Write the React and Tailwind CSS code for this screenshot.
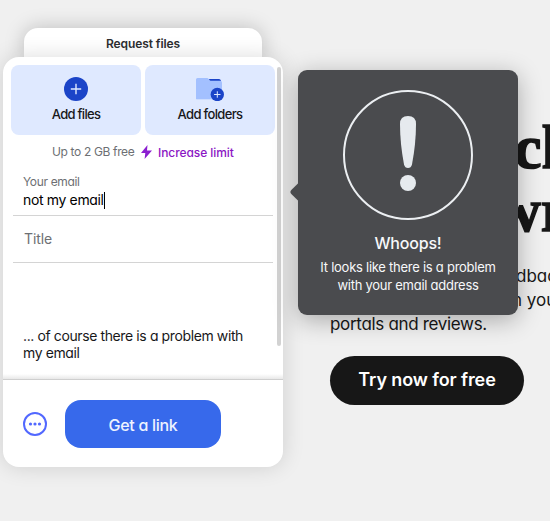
import React from "react";

const sans = "font-['Inter','Liberation_Sans',sans-serif] [font-feature-settings:'cv11','ss03']";

function AddFilesIcon() {
  return (
    <svg width="24" height="24" viewBox="0 0 24 24" className="block">
      <circle cx="12" cy="12" r="12" fill="#1b44c8" />
      <path d="M12 6.800v10.400M6.800 12h10.400" stroke="#e0eaff" strokeWidth="1.400" />
    </svg>
  );
}

function AddFolderIcon() {
  return (
    <svg width="28" height="24" viewBox="0 0 28 24" className="block">
      <path d="M13 2h10q1.500 0 2 2v2H14z" fill="#1b44c8" />
      <path d="M0 22V2.500Q0 1 1.500 1H11q1.200 0 1.700.9l.5.9q.4.900 1.500.900H24q2 0 2 2V22z" fill="#a3c0ff" />
      <path d="M0 22h26v.8H1q-1 0-1-.8z" fill="#c7d9ff" />
      <circle cx="21.300" cy="17.500" r="6.700" fill="#1b44c8" />
      <path d="M21.300 14.300v6.400M18.100 17.500h6.400" stroke="#e0eaff" strokeWidth="1" />
    </svg>
  );
}

function UploadTile({ icon, children }) {
  return (
    <div className="flex h-[70px] w-[130px] flex-col items-center rounded-lg bg-[#dfe9ff] pt-3 text-[13px] font-medium text-[#17181a]">
      {icon}
      {children}
    </div>
  );
}

function TransferPanel() {
  return (
    <div className="w-[286px] shrink-0 pl-[3px] pt-7">
      <div className="ml-[21px] h-[29px] w-[238px] rounded-t-[14px] bg-white text-center text-[12px] font-semibold leading-[32px] text-[#2d2e30] shadow-[0_0_20px_rgba(0,0,0,0.22)]">
        <span className="tracking-[-0.1px]">Request files</span>
      </div>
      <div className="relative flex h-[410px] w-[280px] flex-col overflow-hidden rounded-2xl bg-white shadow-[0_0_22px_rgba(0,0,0,0.14)]">
        <div className="flex h-[322px]">
          <div className="w-[272px] shrink-0 pl-2 pt-2">
            <div className="flex gap-1">
              <UploadTile icon={<AddFilesIcon />}>
                <span className="mt-[3px] leading-[20px] tracking-[-0.7px]">Add files</span>
              </UploadTile>
              <UploadTile icon={<AddFolderIcon />}>
                <span className="mt-[3px] leading-[20px] tracking-[-0.65px]">Add folders</span>
              </UploadTile>
            </div>
            <div className="flex h-[34px] items-center pl-[41px] text-[12px]">
              <span className="w-[89px] whitespace-nowrap tracking-[-0.35px] text-[#6d6f73]">Up to 2 GB free</span>
              <svg width="11" height="14" viewBox="0 0 11 14" className="block">
                <path d="M6.500 0L0 8h4.300L3.600 14 11 5.600H6z" fill="#8b1fd0" />
              </svg>
              <span className="ml-[6px] mt-[2px] whitespace-nowrap font-medium tracking-[-0.07px] text-[#8b16c4]">Increase limit</span>
            </div>
            <div className="ml-[2px] h-[47px] w-[260px] border-b border-[#d4d4d4] pl-[10px] pt-[5px]">
              <div className="text-[12px] leading-[16px] tracking-[-0.35px] text-[#6d6f73]">Your email</div>
              <div className="flex items-center text-[14px] leading-[20px] text-black">
                <span className="tracking-[-0.35px]">not my email</span>
                <span className="h-[17px] w-px bg-black" />
              </div>
            </div>
            <div className="ml-[2px] h-[47px] w-[260px] border-b border-[#d4d4d4] pl-[11px] text-[14px] leading-[45px] tracking-[-0.1px] text-[#6d6f73]">Title</div>
            <div className="whitespace-nowrap pl-3 pt-[64px] text-[14px] leading-[17px] tracking-[-0.39px] text-[#17181a]">
              <div>... of course there is a problem with</div>
              <div>my email</div>
            </div>
          </div>
          <div className="ml-[2px] mt-[10px] h-[279px] w-1 rounded-full bg-[#d2d2d2]" />
        </div>
        <div className="-mt-[5px] h-[5px] bg-gradient-to-b from-white to-[#e8e8e8]" />
        <div className="flex h-[88px] items-center border-t border-[#cfcfcf] pb-px pl-5 pt-[2px]">
          <svg width="24" height="24" viewBox="0 0 24 24" className="block">
            <circle cx="12" cy="12" r="11" fill="none" stroke="#5268ff" strokeWidth="2" />
            <circle cx="7.500" cy="12" r="1.600" fill="#5268ff" />
            <circle cx="12" cy="12" r="1.600" fill="#5268ff" />
            <circle cx="16.500" cy="12" r="1.600" fill="#5268ff" />
          </svg>
          <button className="ml-[18px] h-12 w-[156px] rounded-2xl bg-[#3769eb] pt-[2px] text-[16px] font-medium tracking-[-0.3px] text-[#eef3ff]">Get a link</button>
        </div>
      </div>
    </div>
  );
}

function ErrorPopover() {
  return (
    <div className="absolute left-[298px] top-[70px] z-10 flex h-[245px] w-[220px] flex-col items-center rounded-[9px] bg-[#4a4b4e] pt-5 text-center text-[#f7f8fa] shadow-[0_5px_24px_rgba(0,0,0,0.3)]">
      <svg width="9" height="22" viewBox="0 0 9 22" className="absolute -left-[8px] top-[111px]">
        <path d="M9 1.500L1.300 9q-1.800 2 0 4L9 20.500z" fill="#4a4b4e" />
      </svg>
      <svg width="130" height="130" viewBox="0 0 130 130" className="block">
        <circle cx="65" cy="65" r="64" fill="none" stroke="#eceff2" strokeWidth="2" />
        <path d="M57 34Q57 26 65 26T73 34Q73 53 69 74.500Q68 78 65 78T61 74.500Q57 53 57 34Z" fill="#e6eaee" />
        <circle cx="65" cy="93" r="8" fill="#e6eaee" />
      </svg>
      <div className="mt-[11px] text-[16px] font-medium leading-[24px] tracking-[-0.2px]">Whoops!</div>
      <div className="mt-[3px] whitespace-nowrap text-[13px] leading-[18px] tracking-[-0.26px]">
        <div>It looks like there is a problem</div>
        <div>with your email address</div>
      </div>
    </div>
  );
}

function Promo() {
  return (
    <div className="w-[264px] shrink-0 overflow-hidden pl-[44px] pt-[116px] text-[#171717]">
      <div className="whitespace-nowrap font-['Liberation_Serif',serif] text-[62px] font-bold leading-[62px] [-webkit-text-stroke:1.5px_#171717]">
        <div className="pl-[184px]">ch</div>
        <div className="pl-[166px] pt-px">wr</div>
      </div>
      <div className="mt-[23px] whitespace-nowrap text-[17px] leading-[24px]">
        <div className="pl-[186px]">dback</div>
        <div className="pl-[182px]">n your</div>
        <div className="tracking-[-0.32px]">portals and reviews.</div>
      </div>
      <button className="mt-[20px] h-[49px] w-[194px] rounded-full bg-[#171717] pb-[2px] text-[18px] font-semibold tracking-[-0.1px] text-white">Try now for free</button>
    </div>
  );
}

export default function App() {
  return (
    <div className={`relative flex h-[521px] w-[550px] overflow-hidden bg-[#f0f0f0] ${sans}`}>
      <TransferPanel />
      <Promo />
      <ErrorPopover />
    </div>
  );
}
